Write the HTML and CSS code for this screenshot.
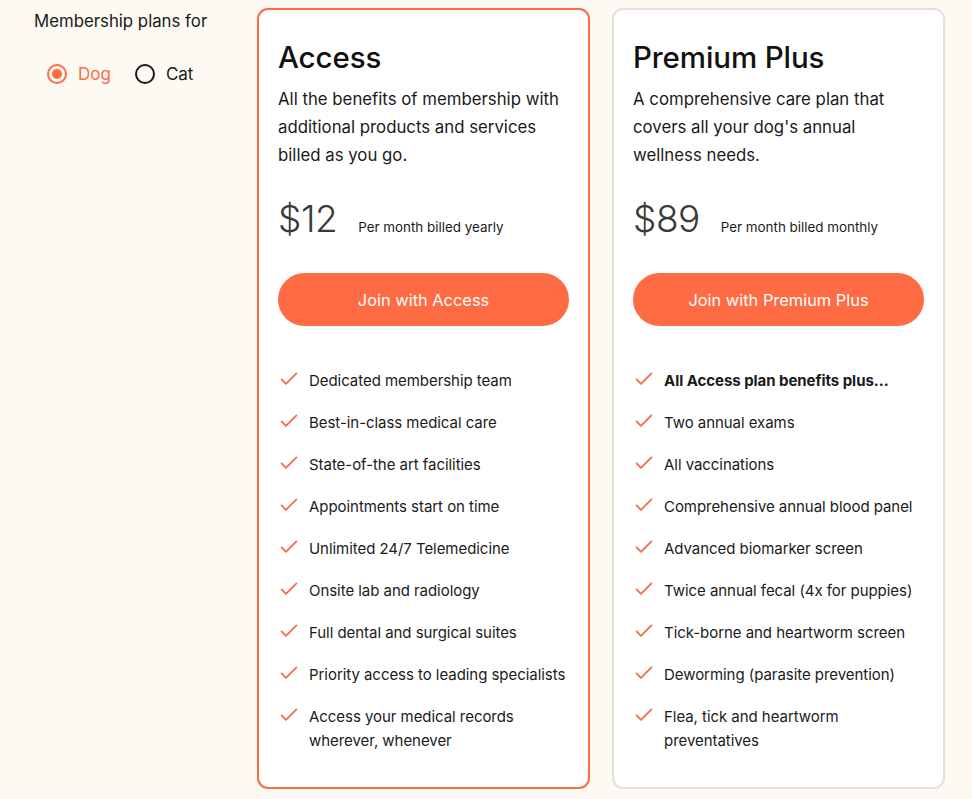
FILE: index.html
```html
<!DOCTYPE html>
<html lang="en">
<head>
<meta charset="utf-8">
<title>Membership plans</title>
<link rel="stylesheet" href="styles.css">
</head>
<body>
<main class="page">
  <aside class="sidebar">
    <p class="sidebar-title">Membership plans for</p>
    <div class="radios">
      <label class="radio-option is-checked"><span class="radio"><span class="radio-dot"></span></span><span class="radio-label">Dog</span></label>
      <label class="radio-option"><span class="radio"></span><span class="radio-label">Cat</span></label>
    </div>
  </aside>

  <section class="card card-selected">
    <h2 class="card-title">Access</h2>
    <p class="card-desc">All the benefits of membership with additional products and services billed as you go.</p>
    <div class="price-row"><span class="price">$12</span><span class="price-note">Per month billed yearly</span></div>
    <button class="join-btn">Join with Access</button>
    <ul class="features">
      <li><svg class="check" viewBox="0 0 20 16"><path d="M1.5 8.5 L6.5 13.5 L18.5 1.5"/></svg><span>Dedicated membership team</span></li>
      <li><svg class="check" viewBox="0 0 20 16"><path d="M1.5 8.5 L6.5 13.5 L18.5 1.5"/></svg><span>Best-in-class medical care</span></li>
      <li><svg class="check" viewBox="0 0 20 16"><path d="M1.5 8.5 L6.5 13.5 L18.5 1.5"/></svg><span>State-of-the art facilities</span></li>
      <li><svg class="check" viewBox="0 0 20 16"><path d="M1.5 8.5 L6.5 13.5 L18.5 1.5"/></svg><span>Appointments start on time</span></li>
      <li><svg class="check" viewBox="0 0 20 16"><path d="M1.5 8.5 L6.5 13.5 L18.5 1.5"/></svg><span>Unlimited 24/7 Telemedicine</span></li>
      <li><svg class="check" viewBox="0 0 20 16"><path d="M1.5 8.5 L6.5 13.5 L18.5 1.5"/></svg><span>Onsite lab and radiology</span></li>
      <li><svg class="check" viewBox="0 0 20 16"><path d="M1.5 8.5 L6.5 13.5 L18.5 1.5"/></svg><span>Full dental and surgical suites</span></li>
      <li><svg class="check" viewBox="0 0 20 16"><path d="M1.5 8.5 L6.5 13.5 L18.5 1.5"/></svg><span>Priority access to leading specialists</span></li>
      <li><svg class="check" viewBox="0 0 20 16"><path d="M1.5 8.5 L6.5 13.5 L18.5 1.5"/></svg><span>Access your medical records wherever, whenever</span></li>
    </ul>
  </section>

  <section class="card">
    <h2 class="card-title">Premium Plus</h2>
    <p class="card-desc">A comprehensive care plan that covers all your dog's annual wellness needs.</p>
    <div class="price-row"><span class="price">$89</span><span class="price-note">Per month billed monthly</span></div>
    <button class="join-btn">Join with Premium Plus</button>
    <ul class="features">
      <li><svg class="check" viewBox="0 0 20 16"><path d="M1.5 8.5 L6.5 13.5 L18.5 1.5"/></svg><span class="strong">All Access plan benefits plus...</span></li>
      <li><svg class="check" viewBox="0 0 20 16"><path d="M1.5 8.5 L6.5 13.5 L18.5 1.5"/></svg><span>Two annual exams</span></li>
      <li><svg class="check" viewBox="0 0 20 16"><path d="M1.5 8.5 L6.5 13.5 L18.5 1.5"/></svg><span>All vaccinations</span></li>
      <li><svg class="check" viewBox="0 0 20 16"><path d="M1.5 8.5 L6.5 13.5 L18.5 1.5"/></svg><span>Comprehensive annual blood panel</span></li>
      <li><svg class="check" viewBox="0 0 20 16"><path d="M1.5 8.5 L6.5 13.5 L18.5 1.5"/></svg><span>Advanced biomarker screen</span></li>
      <li><svg class="check" viewBox="0 0 20 16"><path d="M1.5 8.5 L6.5 13.5 L18.5 1.5"/></svg><span>Twice annual fecal (4x for puppies)</span></li>
      <li><svg class="check" viewBox="0 0 20 16"><path d="M1.5 8.5 L6.5 13.5 L18.5 1.5"/></svg><span>Tick-borne and heartworm screen</span></li>
      <li><svg class="check" viewBox="0 0 20 16"><path d="M1.5 8.5 L6.5 13.5 L18.5 1.5"/></svg><span>Deworming (parasite prevention)</span></li>
      <li><svg class="check" viewBox="0 0 20 16"><path d="M1.5 8.5 L6.5 13.5 L18.5 1.5"/></svg><span>Flea, tick and heartworm preventatives</span></li>
    </ul>
  </section>
</main>
</body>
</html>
```

FILE: styles.css
```css
* { box-sizing: border-box; }

html, body {
  margin: 0;
  padding: 0;
  background: #fdf9f3;
}

body {
  width: 972px;
  height: 799px;
  overflow: hidden;
  font-family: Inter, "Noto Sans", sans-serif;
  color: #161616;
}

.page {
  display: flex;
  gap: 22px;
  padding: 8px 0 10px 0;
  height: 799px;
}

.sidebar {
  width: 235px;
  flex: 0 0 235px;
  padding: 1px 0 0 34px;
}

.sidebar-title {
  margin: 0;
  font-size: 16.8px;
  line-height: 24px;
  color: #1a1a1a;
}

.radios {
  display: flex;
  gap: 24px;
  margin-top: 29px;
  padding-left: 13px;
}

.radio-option {
  display: flex;
  align-items: center;
  gap: 11px;
  font-size: 17px;
  line-height: 24px;
  color: #1a1a1a;
}

.radio {
  width: 20px;
  height: 20px;
  border: 2px solid #1a1a1a;
  border-radius: 50%;
  display: flex;
  align-items: center;
  justify-content: center;
}

.is-checked .radio { border-color: #ff6b42; }
.is-checked .radio-label { color: #ff6b42; }

.radio-dot {
  width: 10px;
  height: 10px;
  border-radius: 50%;
  background: #ff6b42;
}

.card {
  width: 333px;
  flex: 0 0 333px;
  background: #fff;
  border: 2px solid #e4e1dc;
  border-radius: 11px;
  padding: 27px 19px 0 19px;
}

.card-selected { border-color: #ff6b42; }

.card-title {
  margin: 0;
  font-size: 29.5px;
  line-height: 40px;
  font-weight: 500;
  letter-spacing: -0.1px;
  color: #111;
}

.card-desc {
  margin: 8px 0 0 0;
  font-size: 16.8px;
  line-height: 28px;
  color: #1a1a1a;
}

.price-row {
  display: flex;
  align-items: baseline;
  gap: 21px;
  margin-top: 28px;
  height: 44px;
}

.price {
  font-family: Inter, "Noto Sans", sans-serif;
  font-weight: 300;
  font-size: 37px;
  line-height: 44px;
  letter-spacing: -0.5px;
  color: #3a3a3a;
}

.price-note {
  font-size: 13.4px;
  color: #1a1a1a;
}

.join-btn {
  display: block;
  width: 100%;
  height: 53px;
  margin-top: 32px;
  border: none;
  border-radius: 27px;
  background: #ff6b42;
  color: #fff;
  font-family: Inter, "Noto Sans", sans-serif;
  font-size: 16.4px;
  cursor: pointer;
}

.features {
  list-style: none;
  margin: 43px 0 0 0;
  padding: 0;
  display: flex;
  flex-direction: column;
  gap: 18px;
}

.features li {
  display: flex;
  align-items: flex-start;
  font-size: 15px;
  line-height: 24px;
  letter-spacing: -0.05px;
  color: #1a1a1a;
}

.check {
  flex: 0 0 18px;
  width: 18px;
  height: 14px;
  margin: 3px 11px 0 2px;
  fill: none;
  stroke: #f26a4b;
  stroke-width: 2;
  stroke-linecap: round;
  stroke-linejoin: round;
}

.strong { font-weight: 700; }
```
